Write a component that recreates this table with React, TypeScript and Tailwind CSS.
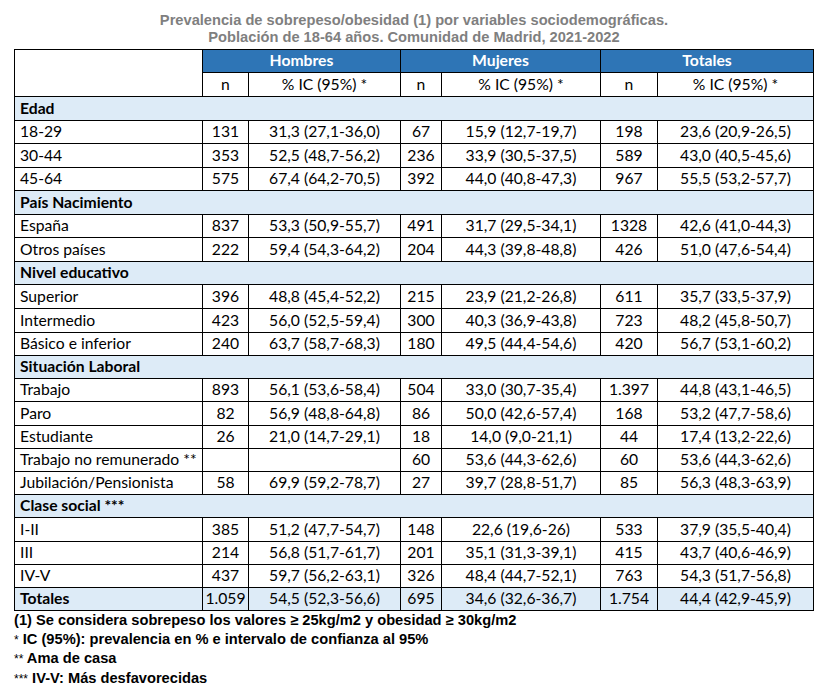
type Row = [string, string, string, string, string, string, string];

type Section = { title: string; rows: Row[] };

const sections: Section[] = [
  {
    title: "Edad",
    rows: [
      ["18-29", "131", "31,3 (27,1-36,0)", "67", "15,9 (12,7-19,7)", "198", "23,6 (20,9-26,5)"],
      ["30-44", "353", "52,5 (48,7-56,2)", "236", "33,9 (30,5-37,5)", "589", "43,0 (40,5-45,6)"],
      ["45-64", "575", "67,4 (64,2-70,5)", "392", "44,0 (40,8-47,3)", "967", "55,5 (53,2-57,7)"],
    ],
  },
  {
    title: "País Nacimiento",
    rows: [
      ["España", "837", "53,3 (50,9-55,7)", "491", "31,7 (29,5-34,1)", "1328", "42,6 (41,0-44,3)"],
      ["Otros países", "222", "59,4 (54,3-64,2)", "204", "44,3 (39,8-48,8)", "426", "51,0 (47,6-54,4)"],
    ],
  },
  {
    title: "Nivel educativo",
    rows: [
      ["Superior", "396", "48,8 (45,4-52,2)", "215", "23,9 (21,2-26,8)", "611", "35,7 (33,5-37,9)"],
      ["Intermedio", "423", "56,0 (52,5-59,4)", "300", "40,3 (36,9-43,8)", "723", "48,2 (45,8-50,7)"],
      ["Básico e inferior", "240", "63,7 (58,7-68,3)", "180", "49,5 (44,4-54,6)", "420", "56,7 (53,1-60,2)"],
    ],
  },
  {
    title: "Situación Laboral",
    rows: [
      ["Trabajo", "893", "56,1 (53,6-58,4)", "504", "33,0 (30,7-35,4)", "1.397", "44,8 (43,1-46,5)"],
      ["Paro", "82", "56,9 (48,8-64,8)", "86", "50,0 (42,6-57,4)", "168", "53,2 (47,7-58,6)"],
      ["Estudiante", "26", "21,0 (14,7-29,1)", "18", "14,0 (9,0-21,1)", "44", "17,4 (13,2-22,6)"],
      ["Trabajo no remunerado **", "", "", "60", "53,6 (44,3-62,6)", "60", "53,6 (44,3-62,6)"],
      ["Jubilación/Pensionista", "58", "69,9 (59,2-78,7)", "27", "39,7 (28,8-51,7)", "85", "56,3 (48,3-63,9)"],
    ],
  },
  {
    title: "Clase social ***",
    rows: [
      ["I-II", "385", "51,2 (47,7-54,7)", "148", "22,6 (19,6-26)", "533", "37,9 (35,5-40,4)"],
      ["III", "214", "56,8 (51,7-61,7)", "201", "35,1 (31,3-39,1)", "415", "43,7 (40,6-46,9)"],
      ["IV-V", "437", "59,7 (56,2-63,1)", "326", "48,4 (44,7-52,1)", "763", "54,3 (51,7-56,8)"],
    ],
  },
];

const totals: Row = ["Totales", "1.059", "54,5 (52,3-56,6)", "695", "34,6 (32,6-36,7)", "1.754", "44,4 (42,9-45,9)"];

function DataRow({ row, shaded }: { row: Row; shaded?: boolean }) {
  const bg = shaded ? "bg-[#ddebf7]" : "bg-white";
  return (
    <>
      <div className={`${bg} flex items-center pl-[5px] ${shaded ? "font-bold" : ""}`}>{row[0]}</div>
      {row.slice(1).map((v, i) => (
        <div key={i} className={`${bg} flex items-center justify-center`}>
          {v}
        </div>
      ))}
    </>
  );
}

export default function App() {
  return (
    <div className="w-[826px] h-[688px] bg-white overflow-hidden">
      {/* Título */}
      <div className="w-[800px] ml-[14px] pt-[12px] h-[49px] text-center text-[14.67px] leading-[17px] font-bold text-[#7f7f7f] font-['Liberation_Sans',Arial,sans-serif]">
        <div>Prevalencia de sobrepeso/obesidad (1) por variables sociodemográficas.</div>
        <div>Población de 18-64 años. Comunidad de Madrid, 2021-2022</div>
      </div>

      {/* Tabla */}
      <div className="ml-[14px] w-[800px] p-px bg-black grid grid-cols-[187px_45px_151px_40px_158px_56px_155px] grid-rows-[22px_23px_23px_22px_23px_22px_23px_22px_23px_22px_23px_23px_22px_22px_22px_23px_22px_22px_22px_22px_23px_22px_22px_22px] gap-px text-[15.7px] leading-none text-black font-['Lato','Open_Sans',sans-serif]">
        <div className="row-span-2 bg-white" />
        <div className="col-span-2 bg-[#2e75b6] text-white font-bold flex items-center justify-center">Hombres</div>
        <div className="col-span-2 bg-[#2e75b6] text-white font-bold flex items-center justify-center">Mujeres</div>
        <div className="col-span-2 bg-[#2e75b6] text-white font-bold flex items-center justify-center">Totales</div>
        <div className="bg-white flex items-center justify-center">n</div>
        <div className="bg-white flex items-center justify-center">% IC (95%) *</div>
        <div className="bg-white flex items-center justify-center">n</div>
        <div className="bg-white flex items-center justify-center">% IC (95%) *</div>
        <div className="bg-white flex items-center justify-center">n</div>
        <div className="bg-white flex items-center justify-center">% IC (95%) *</div>

        {sections.map((s) => (
          <div key={s.title} className="contents">
            <div className="col-span-7 bg-[#ddebf7] font-bold flex items-center pl-[5px]">{s.title}</div>
            {s.rows.map((r) => (
              <DataRow key={r[0]} row={r} />
            ))}
          </div>
        ))}
        <DataRow row={totals} shaded />
      </div>

      {/* Notas */}
      <div className="ml-[14px] text-[14.67px] leading-[18.5px] font-bold text-black font-['Liberation_Sans',Arial,sans-serif]">
        <div>(1) Se considera sobrepeso los valores ≥ 25kg/m2 y obesidad ≥ 30kg/m2</div>
        <div>
          <span className="font-normal text-[12px]">*</span> IC (95%): prevalencia en % e intervalo de confianza al 95%
        </div>
        <div>
          <span className="font-normal text-[12px]">**</span> Ama de casa
        </div>
        <div>
          <span className="font-normal text-[12px]">***</span> IV-V: Más desfavorecidas
        </div>
      </div>
    </div>
  );
}
